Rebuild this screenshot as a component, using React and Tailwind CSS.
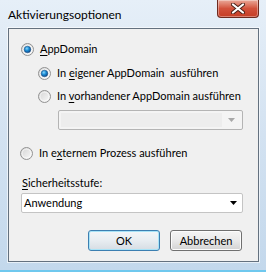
import React from 'react'

const font = { fontFamily: 'Lato, "Noto Sans", sans-serif' }

function Radio({ checked }) {
  return (
    <svg width="13" height="13" viewBox="0 0 13 13" className="shrink-0">
      <defs>
        <linearGradient id="rb" x1="0" y1="0" x2="1" y2="1">
          <stop offset="0" stopColor="#d2d2d2" />
          <stop offset="1" stopColor="#fbfbfb" />
        </linearGradient>
        <radialGradient id="rdot" cx="0.4" cy="0.35" r="0.7">
          <stop offset="0" stopColor="#8fd6fb" />
          <stop offset="0.45" stopColor="#1c8fd6" />
          <stop offset="1" stopColor="#0d3f80" />
        </radialGradient>
      </defs>
      <circle cx="6.5" cy="6.5" r="6" fill="url(#rb)" stroke="#929292" strokeWidth="1" />
      <circle cx="6.5" cy="6.5" r="4.4" fill="none" stroke="#ffffff" strokeOpacity="0.7" strokeWidth="0.8" />
      {checked && <circle cx="6.5" cy="6.5" r="3.3" fill="url(#rdot)" stroke="#1b4f84" strokeWidth="0.5" />}
    </svg>
  )
}

function Arrow({ color }) {
  return (
    <svg width="7" height="4" viewBox="0 0 7 4">
      <path d="M0 0 H7 L3.5 4 Z" fill={color} />
    </svg>
  )
}

function U({ children }) {
  return <span className="underline underline-offset-2">{children}</span>
}

export default function App() {
  return (
    <div style={font} className="w-[266px] h-[272px] overflow-hidden text-[11px] text-black whitespace-nowrap">
      <div className="relative w-[266px] h-[272px] bg-gradient-to-b from-[#e6eff8] via-[#d3e2f1] to-[#c3d8ec] pl-[8px] pr-[7px] pt-[28px] pb-[8px] border-b-2 border-b-[#6fc8ee]">
        {/* title */}
        <div className="absolute left-[8px] top-[7px] text-[12px] text-black leading-[16px]">Aktivierungsoptionen</div>
        {/* close button */}
        <div className="absolute left-[217px] top-0 w-[42px] h-[18px] rounded-b-[4px] border border-t-0 border-[#6e2a1f] bg-gradient-to-b from-[#e9a899] via-[#d2513b] to-[#c53d25] flex items-center justify-center shadow-[inset_0_0_0_1px_rgba(255,255,255,0.35)]">
          <svg width="14" height="11" viewBox="0 0 14 11">
            <path d="M2 1.5 L12 9.5 M12 1.5 L2 9.5" stroke="#4a2018" strokeWidth="4" strokeLinecap="round" />
            <path d="M2 1.5 L12 9.5 M12 1.5 L2 9.5" stroke="#ffffff" strokeWidth="2.2" strokeLinecap="round" />
          </svg>
        </div>

        {/* client area */}
        <div className="h-full w-full bg-[#f0f0f0] border border-[#64717f] shadow-[0_0_0_1px_rgba(255,255,255,0.6)] flex flex-col">
          <div className="mt-[12px] h-[16px] flex items-center pl-[12px] gap-[6px]">
            <Radio checked />
            <span><U>A</U>ppDomain</span>
          </div>
          <div className="mt-[8px] h-[16px] flex items-center pl-[29px] gap-[6px]">
            <Radio checked />
            <span>In <U>e</U>igener AppDomain&nbsp; ausführen</span>
          </div>
          <div className="mt-[7px] h-[16px] flex items-center pl-[29px] gap-[6px]">
            <Radio />
            <span>In <U>v</U>orhandener AppDomain ausführen</span>
          </div>
          <div className="mt-[6px] ml-[49px] w-[185px] h-[20px] border border-[#b4b4b4] rounded-[2px] bg-[#f4f4f4] flex items-center p-[2px]">
            <div className="flex-1 h-full bg-[#ededed]" />
            <div className="w-[18px] flex items-center justify-center">
              <Arrow color="#a8a8a8" />
            </div>
          </div>
          <div className="mt-[15px] h-[16px] flex items-center pl-[11px] gap-[6px]">
            <Radio />
            <span>In e<U>x</U>ternem Prozess ausführen</span>
          </div>
          <div className="mt-[14px] h-[16px] flex items-center pl-[13px]">
            <span><U>S</U>icherheitsstufe:</span>
          </div>
          <div className="mt-[2px] ml-[12px] w-[222px] h-[20px] border border-[#c4c4c4] rounded-[2px] bg-white flex items-center pl-[2px]">
            <span className="flex-1 leading-[16px]">Anwendung</span>
            <div className="w-[18px] flex items-center justify-center">
              <Arrow color="#000000" />
            </div>
          </div>
          <div className="mt-[17px] flex justify-end pr-[16px] gap-[10px]">
            <button className="w-[72px] h-[21px] rounded-[3px] border border-[#3c7fb1] bg-gradient-to-b from-[#f3f6f8] via-[#e8edf1] to-[#d6dde3] shadow-[inset_0_0_0_1px_#a8e3f7] leading-[16px]">OK</button>
            <button className="w-[72px] h-[21px] rounded-[3px] border border-[#707070] bg-gradient-to-b from-[#f4f4f4] via-[#e9e9e9] to-[#d3d3d3] shadow-[inset_0_0_0_1px_#fcfcfc] leading-[16px]">Abbrechen</button>
          </div>
        </div>
      </div>
    </div>
  )
}
